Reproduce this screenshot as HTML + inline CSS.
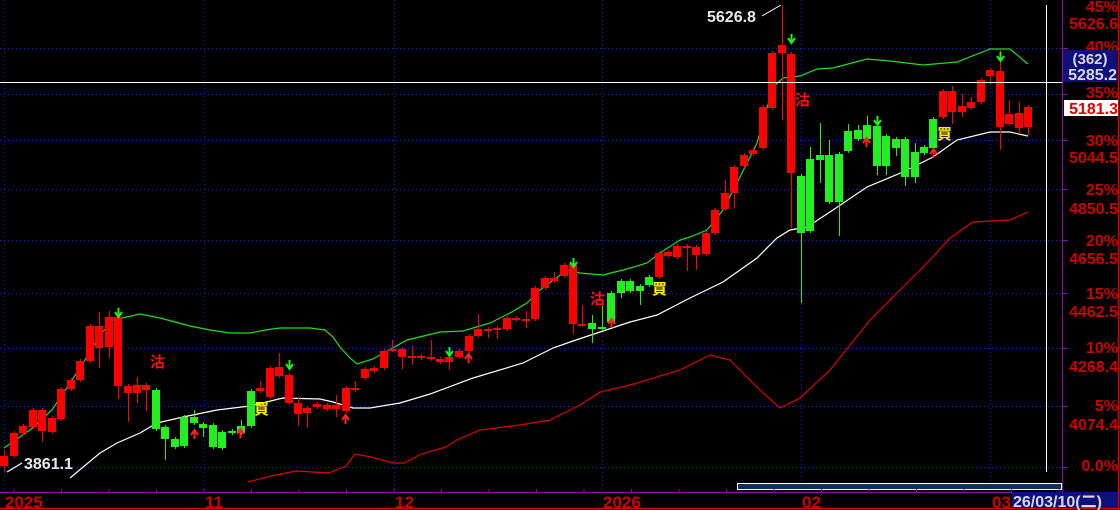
<!DOCTYPE html>
<html><head><meta charset="utf-8"><style>
html,body{margin:0;padding:0;background:#000;width:1120px;height:510px;overflow:hidden}
svg{display:block}
text{font-family:"Liberation Sans","Noto Sans CJK TC",sans-serif;font-weight:bold}
</style></head><body>
<svg id="s" width="1120" height="510" xmlns="http://www.w3.org/2000/svg">
<rect width="1120" height="510" fill="#000"/>
<g id="grid" stroke="#1a1aff" stroke-width="1" stroke-dasharray="1,3"></g>
<g id="lines" fill="none" stroke-width="1.2"></g>
<g id="c"></g>
<line x1="0" y1="82.5" x2="1062" y2="82.5" stroke="#fff"/>
<line x1="1046.5" y1="5" x2="1046.5" y2="472" stroke="#fff"/>
<text x="707" y="22" fill="#e8e8e8" font-size="16">5626.8</text>
<line x1="762" y1="16" x2="781" y2="5" stroke="#fff"/>
<text x="24" y="469" fill="#e8e8e8" font-size="16">3861.1</text>
<g font-size="15" fill="#ff1010">
<text x="150" y="367">沽</text><text x="590" y="304">沽</text><text x="795" y="105">沽</text>
</g>
<g font-size="15" fill="#ffee00">
<text x="254" y="414">買</text><text x="652" y="294">買</text><text x="937" y="139">買</text>
</g>
<g id="arr"></g>
<line x1="1062.5" y1="0" x2="1062.5" y2="492" stroke="#8a10a0"/>
<line x1="1118.5" y1="0" x2="1118.5" y2="510" stroke="#e00000" stroke-width="1.5"/>
<g font-size="16" fill="#d00000" text-anchor="end">
<text x="1118" y="12">45%</text><text x="1118" y="29">5626.6</text>
<text x="1118" y="52">40%</text>
<text x="1118" y="98">35%</text>
<text x="1118" y="146">30%</text><text x="1118" y="163">5044.5</text>
<text x="1118" y="195">25%</text><text x="1118" y="214">4850.5</text>
<text x="1118" y="246">20%</text><text x="1118" y="264">4656.5</text>
<text x="1118" y="299">15%</text><text x="1118" y="317">4462.5</text>
<text x="1118" y="353">10%</text><text x="1118" y="372">4268.4</text>
<text x="1118" y="411">5%</text><text x="1118" y="430">4074.4</text>
<text x="1118" y="471">0.0%</text>
</g>
<rect x="1063" y="50" width="54" height="32" fill="#10107a"/>
<text x="1090" y="64" font-size="15" fill="#d8d8e8" text-anchor="middle" font-weight="normal">(362)</text>
<text x="1117" y="80" font-size="16" fill="#d8d8e8" text-anchor="end">5285.2</text>
<rect x="1064" y="100" width="54" height="16" fill="#fff"/>
<text x="1118" y="114" font-size="16" fill="#e00000" text-anchor="end">5181.3</text>
<rect x="737.5" y="483.5" width="324" height="6" fill="#10305a" stroke="#fff"/>
<line x1="0" y1="492.5" x2="1118" y2="492.5" stroke="#8a10a0"/>
<line x1="0" y1="508.5" x2="1118" y2="508.5" stroke="#e00000" stroke-width="1.5"/>
<g id="ticks" stroke="#8a10a0"></g>
<g font-size="17" fill="#d00000">
<text x="5" y="508">2025</text><text x="205" y="508">11</text><text x="395" y="508">12</text>
<text x="603" y="508">2026</text><text x="802" y="508">02</text><text x="992" y="508">03</text>
</g>
<rect x="1012" y="492" width="106" height="16" fill="#10107a"/>
<text x="1013" y="507" font-size="16" fill="#d8d8e8">26/03/10(二)</text>
</svg>
<script>
var NS="http://www.w3.org/2000/svg";
function el(p,t,a){var e=document.createElementNS(NS,t);for(var k in a)e.setAttribute(k,a[k]);document.getElementById(p).appendChild(e);return e;}
[48,94,140,189,240,293,348,406,467].forEach(function(y){el("grid","line",{x1:0,y1:y+.5,x2:1062,y2:y+.5});el("grid","line",{x1:1062,y1:y+.5,x2:1068,y2:y+.5,stroke:"#8a10a0","stroke-dasharray":"none"});});
[4,204,394,602,801,990].forEach(function(x){el("grid","line",{x1:x+.5,y1:0,x2:x+.5,y2:492});});
for(var x=14;x<1062;x+=47.5){el("ticks","line",{x1:x,y1:492,x2:x,y2:489});}
function pl(pts,col){el("lines","polyline",{points:pts,stroke:col});}
pl("4,448 30,430 52,410 80,368 100,335 113,320 140,314 160,318 190,326 210,330 230,333 250,333 265,330 280,328 310,328 325,330 333,337 340,347 350,358 357,364 373,359 407,340 440,332 463,331 490,323 510,313 527,303 540,290 567,270 580,273 603,275 623,270 647,263 660,253 680,240 690,237 707,230 723,210 740,177 757,143 773,87 783,78 800,76 817,69 833,68 867,59 890,61 923,65 957,62 990,49 1010,49 1028,64","#22dd22");
pl("7,472 22,463","#fff");
pl("70,478 100,453 117,443 140,433 157,423 183,417 217,410 250,406 283,398 320,399 333,402 353,408 370,408 400,403 430,394 473,378 523,363 553,348 573,341 600,332 630,322 657,315 690,298 723,282 757,258 777,238 790,230 807,227 833,210 867,187 903,172 933,157 957,140 990,132 1010,132 1028,136","#fff");
pl("248,482 271,476 296,471 329,473 346,466 355,454 371,457 393,463 404,463 421,454 446,447 457,440 480,430 520,425 550,420 580,405 600,392 630,385 680,370 710,355 730,360 760,390 780,408 800,398 830,370 870,320 900,290 930,260 950,238 973,222 1010,220 1028,212","#e00000");
var D=[[4,456,466,450,472,'r'],[14,433,456,0,0,'r'],[23,426,433,424,0,'r'],[33,410,427,0,0,'r'],[42,410,431,0,442,'r'],[52,418,432,0,0,'r'],[61,389,419,0,0,'r'],[71,380,389,0,0,'r'],[80,361,380,0,0,'r'],[90,326,361,0,0,'r'],[99,326,348,312,368,'r'],[109,317,347,311,358,'r'],[118,317,386,0,399,'r'],[128,386,393,0,422,'r'],[137,385,393,377,403,'r'],[146,385,390,0,411,'r'],[156,390,429,0,0,'g'],[165,427,439,0,460,'g'],[175,439,447,0,0,'g'],[184,417,446,0,0,'g'],[194,417,423,410,0,'g'],[203,424,428,0,437,'g'],[213,425,447,0,0,'g'],[222,432,448,0,0,'g'],[232,431,433,0,0,'g'],[241,426,433,420,0,'g'],[251,391,426,0,0,'g'],[260,388,391,381,0,'r'],[270,368,397,0,0,'r'],[279,367,376,353,0,'r'],[289,375,403,0,0,'r'],[298,403,414,397,426,'r'],[307,408,413,0,428,'r'],[317,404,407,0,0,'r'],[327,405,409,0,0,'r'],[336,405,409,395,417,'r'],[346,388,411,0,0,'r'],[355,388,390,381,0,'r'],[365,369,378,0,0,'r'],[374,368,371,0,0,'r'],[384,351,368,0,0,'r'],[392,349,350,340,0,'r'],[402,349,357,0,369,'r'],[412,356,358,346,365,'r'],[421,356,358,0,0,'r'],[431,357,359,340,0,'r'],[440,359,362,0,0,'r'],[449,357,362,0,370,'r'],[459,351,357,0,0,'r'],[469,336,351,0,0,'r'],[478,329,336,314,0,'r'],[488,329,330,0,338,'r'],[497,328,329,0,339,'r'],[507,318,329,0,0,'r'],[516,318,320,0,0,'r'],[526,319,320,311,328,'r'],[535,288,319,0,0,'r'],[545,278,288,0,0,'r'],[554,278,281,272,0,'r'],[564,265,276,0,0,'r'],[573,264,324,259,334,'r'],[582,324,325,305,0,'r'],[592,323,329,315,343,'g'],[602,327,328,306,0,'g'],[611,293,322,0,0,'g'],[621,281,293,0,298,'g'],[630,281,291,0,0,'g'],[640,286,291,0,305,'g'],[649,277,285,0,0,'g'],[659,253,277,0,0,'r'],[668,252,256,0,0,'r'],[677,246,257,0,0,'r'],[687,246,248,0,271,'r'],[696,247,255,0,270,'r'],[706,233,254,0,0,'r'],[715,210,233,0,0,'r'],[725,193,209,180,0,'r'],[734,167,193,0,208,'r'],[744,155,166,0,0,'r'],[753,150,154,0,0,'r'],[763,107,148,0,0,'r'],[772,53,108,0,0,'r'],[782,45,53,5,120,'r'],[791,54,173,0,228,'r'],[801,176,233,0,303,'g'],[810,159,231,147,0,'g'],[820,155,160,123,183,'g'],[829,155,202,140,0,'g'],[839,154,202,0,236,'g'],[848,131,151,124,0,'g'],[858,130,139,125,0,'g'],[867,125,139,116,0,'g'],[877,126,166,0,175,'g'],[886,136,166,134,175,'g'],[896,139,148,0,156,'g'],[905,139,177,0,186,'g'],[915,152,177,143,183,'g'],[924,147,153,0,0,'g'],[933,119,148,0,0,'g'],[943,91,117,0,0,'r'],[952,91,112,86,124,'r'],[962,106,112,94,117,'r'],[971,102,108,97,0,'r'],[981,80,102,0,0,'r'],[990,70,76,0,84,'r'],[1000,71,127,49,150,'r'],[1009,114,124,100,0,'r'],[1019,113,128,102,134,'r'],[1028,107,127,105,135,'r']];
D.forEach(function(d){var col=d[5]=='r'?'#ff0000':'#22ee22';var hi=d[3]||d[1]-2,lo=d[4]||d[2]+2;
el("c","line",{x1:d[0]+.5,y1:hi,x2:d[0]+.5,y2:lo,stroke:col});
el("c","rect",{x:d[0]-4,y:d[1],width:8,height:Math.max(2,d[2]-d[1]),fill:col});});
function down(x,y){el("arr","path",{d:"M"+(x+.5)+" "+(y-8)+"V"+y+"M"+(x-3)+" "+(y-4)+"L"+(x+.5)+" "+(y+1)+"L"+(x+4)+" "+(y-4),stroke:"#22ee22",fill:"none","stroke-width":2});}
function up(x,y){el("arr","path",{d:"M"+(x+.5)+" "+(y+8)+"V"+y+"M"+(x-3)+" "+(y+4)+"L"+(x+.5)+" "+(y-1)+"L"+(x+4)+" "+(y+4),stroke:"#ff2020",fill:"none","stroke-width":2});}
[[118,316],[289,368],[449,355],[573,266],[791,42],[1000,60],[877,124]].forEach(function(a){down(a[0],a[1]);});
[[194,431],[240,430],[345,416],[468,355],[611,320],[866,139],[933,150]].forEach(function(a){up(a[0],a[1]);});
</script>
</body></html>
